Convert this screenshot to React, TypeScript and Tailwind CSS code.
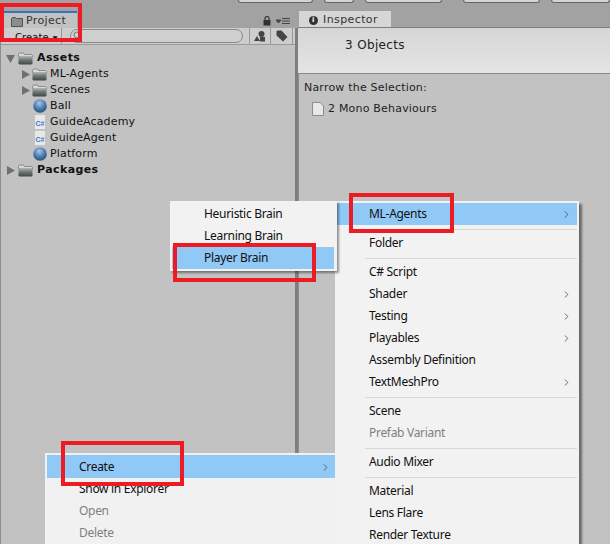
import { ChevronRight } from "lucide-react";

const Folder = () => (
  <svg width="15" height="13" viewBox="0 0 15 13" className="shrink-0">
    <defs>
      <linearGradient id="folderBody" x1="0" y1="0" x2="0" y2="1">
        <stop offset="0" stopColor="#a5adad" />
        <stop offset="0.45" stopColor="#6d7675" />
        <stop offset="1" stopColor="#3f4746" />
      </linearGradient>
    </defs>
    <path d="M0.5 2.5 L1.5 1 H5.5 L6.5 2.5 H13.5 L14.5 3.5 V5 H0.5 Z" fill="#d6d9d8" stroke="#6b7170" strokeWidth="0.7" />
    <path d="M0.5 4.5 H14.5 V11.5 L13.5 12.5 H1.5 L0.5 11.5 Z" fill="url(#folderBody)" />
  </svg>
);

const Sphere = () => (
  <svg width="14" height="14" viewBox="0 0 14 14" className="shrink-0">
    <defs>
      <radialGradient id="ball" cx="0.45" cy="0.3" r="0.75">
        <stop offset="0" stopColor="#a9c6e4" />
        <stop offset="0.5" stopColor="#4f81b3" />
        <stop offset="1" stopColor="#1f4a75" />
      </radialGradient>
    </defs>
    <circle cx="7" cy="7" r="6.8" fill="url(#ball)" />
  </svg>
);

const ScriptFile = () => (
  <div className="w-[10px] h-[14px] ml-[2px] mr-[2px] bg-[#e8e8e8] flex items-end justify-center shrink-0">
    <span className="text-[7px] leading-[10px] font-bold tracking-normal text-[#3f76c9] font-['Liberation_Sans',sans-serif]">C#</span>
  </div>
);

const Arrow = ({ open }: { open?: boolean }) => (
  <svg width="9" height="9" viewBox="0 0 9 9" className="shrink-0">
    {open ? <path d="M0 1 H9 L4.5 9 Z" fill="#6f6f6f" /> : <path d="M1 0 L9 4.5 L1 9 Z" fill="#6f6f6f" />}
  </svg>
);

const TreeRow = ({ label, root, children }: { label: string; root?: boolean; children: React.ReactNode }) => (
  <div className={`h-4 flex items-center text-[11px] text-[#111] ${root ? "font-bold tracking-[0.4px]" : "tracking-[0.15px]"}`}>
    {children}
    <span className="ml-[3px] whitespace-nowrap">{label}</span>
  </div>
);

const MenuRow = ({ label, active, disabled, sub, tall }: { label: string; active?: boolean; disabled?: boolean; sub?: boolean; tall?: boolean }) => (
  <div className={`flex items-center justify-between pr-[5px] pl-[32px] ${tall ? "h-[23px] pt-px" : "h-[22px]"} ${active ? "bg-[#90c8f6]" : ""} ${disabled ? "text-[#7f7f7f]" : "text-[#101010]"}`}>
    <span className="whitespace-nowrap">{label}</span>
    {sub && <ChevronRight size={11} strokeWidth={1.5} className="text-[#333]" />}
  </div>
);

const MenuSep = () => (
  <div className="h-[7px] flex items-center pl-[28px]">
    <div className="h-px w-full bg-[#d7d7d7] mt-[1px]" />
  </div>
);

const RedBox = ({ className }: { className: string }) => (
  <div className={`absolute border-4 border-[#ed1c24] ${className}`} />
);

export default function App() {
  return (
    <div className="relative w-[610px] h-[544px] overflow-hidden bg-[#a2a2a2] font-['DejaVu_Sans',sans-serif] flex flex-col">
      {/* top toolbar, only the bottom of the buttons shows */}
      <div className="h-[4px] flex">
        <div className="ml-[238px] w-[77px] h-[3px] bg-[#d4d4d4] border-b border-x border-[#666] rounded-b-[3px]" />
        <div className="ml-[11px] w-[31px] h-[3px] bg-[#d4d4d4] border-b border-x border-[#666] rounded-b-[3px]" />
        <div className="ml-[11px] w-[79px] h-[3px] bg-[#d4d4d4] border-b border-x border-[#666] rounded-b-[3px]" />
        <div className="ml-[21px] w-[79px] h-[3px] bg-[#d4d4d4] border-b border-x border-[#666] rounded-b-[3px]" />
        <div className="ml-[11px] w-[60px] h-[3px] bg-[#d4d4d4] border-b border-x border-[#666] rounded-b-[3px]" />
      </div>

      <div className="flex-1 flex min-h-0">
        {/* PROJECT */}
        <div className="w-[298px] flex flex-col shrink-0">
          <div className="h-[24px] flex items-end justify-between pl-[4px] pr-[8px]">
            <div className="w-[73px] h-[17px] bg-[#c2c2c2] border-t-2 border-[#3a72bf] flex items-center pl-[7px] pt-[2px] gap-[3px] text-[11px] tracking-[0.35px] text-[#333]">
              <svg width="12" height="10" viewBox="0 0 12 10">
                <path d="M0.5 1.5 L1.5 0.5 H4.5 L5.5 1.5 H11.5 V9.5 H0.5 Z" fill="#8d8d8d" stroke="#555" />
              </svg>
              Project
            </div>
            <div className="flex items-center gap-[5px] mb-[2px]">
              <svg width="8" height="10" viewBox="0 0 8 10">
                <path d="M2 4 V2.5 A2 2 0 0 1 6 2.5 V4" fill="none" stroke="#333" strokeWidth="1.2" />
                <rect x="0.5" y="4" width="7" height="5.5" fill="#333" />
              </svg>
              <svg width="14" height="7" viewBox="0 0 14 7">
                <path d="M0 2 H5 L2.5 5 Z M6 0.5 H14 M6 3 H14 M6 5.5 H14" stroke="#444" fill="#444" />
              </svg>
            </div>
          </div>
          <div className="flex-1 bg-[#c2c2c2] border-l border-[#8c8c8c] border-r-[3px] border-r-[#7f7f7f] flex flex-col">
            <div className="h-[17px] flex items-center border-b border-[#9a9a9a] bg-[#cdcdcd] text-[#222]">
              <div className="w-[61px] h-full border-r border-[#999] pl-[14px] pt-[2px] flex items-center gap-[4px] text-[10px] tracking-[0.1px] text-[#111]">
                Create
                <span className="text-[6px]">▼</span>
              </div>
              <div className="ml-[8px] w-[173px] h-[14px] bg-[#cfcfcf] border border-[#8a8a8a] rounded-full flex items-center pl-[2px]">
                <svg width="10" height="10" viewBox="0 0 10 10">
                  <circle cx="4" cy="4" r="3" fill="none" stroke="#777" />
                  <path d="M6.5 6.5 L9 9" stroke="#777" />
                </svg>
              </div>
              <div className="ml-[6px] w-[22px] h-full border-x border-[#999] flex items-center justify-center">
                <svg width="12" height="11" viewBox="0 0 12 11">
                  <circle cx="7.5" cy="3" r="3" fill="#444" />
                  <path d="M3 5 L6 10 H0 Z" fill="#444" />
                  <rect x="6" y="6" width="5" height="4.5" fill="#444" />
                </svg>
              </div>
              <div className="w-[22px] h-full border-r border-[#999] flex items-center justify-center">
                <svg width="12" height="12" viewBox="0 0 12 12">
                  <path d="M0.5 1.5 L1.5 0.5 H5.5 L11.5 7 L7 11.5 L0.5 5.5 Z" fill="#444" />
                </svg>
              </div>
            </div>
            <div className="pt-[5px] pl-[5px]">
              <TreeRow label="Assets" root>
                <Arrow open />
                <div className="ml-[3px] mr-px"><Folder /></div>
              </TreeRow>
              <div className="pl-[15px]">
                <TreeRow label="ML-Agents">
                  <Arrow />
                  <div className="ml-[2px]"><Folder /></div>
                </TreeRow>
                <TreeRow label="Scenes">
                  <Arrow />
                  <div className="ml-[2px]"><Folder /></div>
                </TreeRow>
                <div className="pl-[12px]">
                  <TreeRow label="Ball"><Sphere /></TreeRow>
                  <TreeRow label="GuideAcademy"><ScriptFile /></TreeRow>
                  <TreeRow label="GuideAgent"><ScriptFile /></TreeRow>
                  <TreeRow label="Platform"><Sphere /></TreeRow>
                </div>
              </div>
              <TreeRow label="Packages" root>
                <Arrow />
                <div className="ml-[3px] mr-px"><Folder /></div>
              </TreeRow>
            </div>
          </div>
        </div>

        {/* INSPECTOR */}
        <div className="flex-1 flex flex-col min-w-0">
          <div className="h-[24px] flex items-end pl-[1px] border-b border-[#7d7d7d]">
            <div className="w-[92px] h-[16px] bg-[#d6d6d6] flex items-center pl-[10px] pt-[2px] gap-[5px] text-[11px] tracking-[0.4px] text-[#333]">
              <span className="w-[9px] h-[9px] rounded-full bg-[#333] text-white text-[7px] font-bold leading-[9px] text-center">i</span>
              Inspector
            </div>
          </div>
          <div className="h-[46px] bg-gradient-to-b from-[#d6d6d6] to-[#e4e4e4] border-b border-[#8a8a8a] pl-[47px] pt-[9px] text-[12px] leading-[16px] tracking-[0.35px] text-[#222]">
            3 Objects
          </div>
          <div className="flex-1 bg-[#c2c2c2] border-l border-[#8c8c8c] pl-[5px] pt-[6px] text-[11px] tracking-[0.2px] text-[#222]">
            <div className="h-4 flex items-center">Narrow the Selection:</div>
            <div className="mt-[5px] pl-[8px] flex items-center gap-[4px] h-4">
              <svg width="12" height="14" viewBox="0 0 12 14">
                <path d="M0.5 0.5 H8 L11.5 4 V13.5 H0.5 Z" fill="#e8e8e8" stroke="#8c8c8c" />
              </svg>
              2 Mono Behaviours
            </div>
          </div>
        </div>
      </div>

      {/* context menus */}
      <div className="absolute left-[45px] top-[453px] w-[292px] h-[100px] pt-[2px] pl-[2px] pr-px bg-[#f1f1f1] text-[12px] tracking-[-0.3px] font-['Noto_Sans',sans-serif]">
        <MenuRow label="Create" active sub tall />
        <MenuRow label="Show in Explorer" />
        <MenuRow label="Open" disabled />
        <MenuRow label="Delete" disabled />
      </div>
      <div className="absolute left-[335px] top-[201px] w-[244px] p-[2px] bg-[#f2f2f2] shadow-[3px_3px_2px_rgba(0,0,0,0.45)] text-[12px] tracking-[-0.3px] font-['Noto_Sans',sans-serif]">
        <MenuRow label="ML-Agents" active sub />
        <MenuSep />
        <MenuRow label="Folder" />
        <MenuSep />
        <MenuRow label="C# Script" />
        <MenuRow label="Shader" sub />
        <MenuRow label="Testing" sub />
        <MenuRow label="Playables" sub />
        <MenuRow label="Assembly Definition" />
        <MenuRow label="TextMeshPro" sub />
        <MenuSep />
        <MenuRow label="Scene" />
        <MenuRow label="Prefab Variant" disabled />
        <MenuSep />
        <MenuRow label="Audio Mixer" />
        <MenuSep />
        <MenuRow label="Material" />
        <MenuRow label="Lens Flare" />
        <MenuRow label="Render Texture" />
      </div>
      <div className="absolute left-[170px] top-[201px] w-[167px] pt-[2px] pb-[2px] pl-[2px] pr-[3px] bg-[#f2f2f2] shadow-[2px_2px_2px_rgba(0,0,0,0.4)] text-[12px] tracking-[-0.3px] font-['Noto_Sans',sans-serif]">
        <MenuRow label="Heuristic Brain" />
        <MenuRow label="Learning Brain" />
        <MenuRow label="Player Brain" active />
      </div>

      {/* red annotation boxes */}
      <RedBox className="left-0 top-[3px] w-[82px] h-[39px]" />
      <RedBox className="left-[349px] top-[193px] w-[105px] h-[40px]" />
      <RedBox className="left-[173px] top-[243px] w-[143px] h-[39px]" />
      <RedBox className="left-[61px] top-[441px] w-[123px] h-[45px]" />
    </div>
  );
}
